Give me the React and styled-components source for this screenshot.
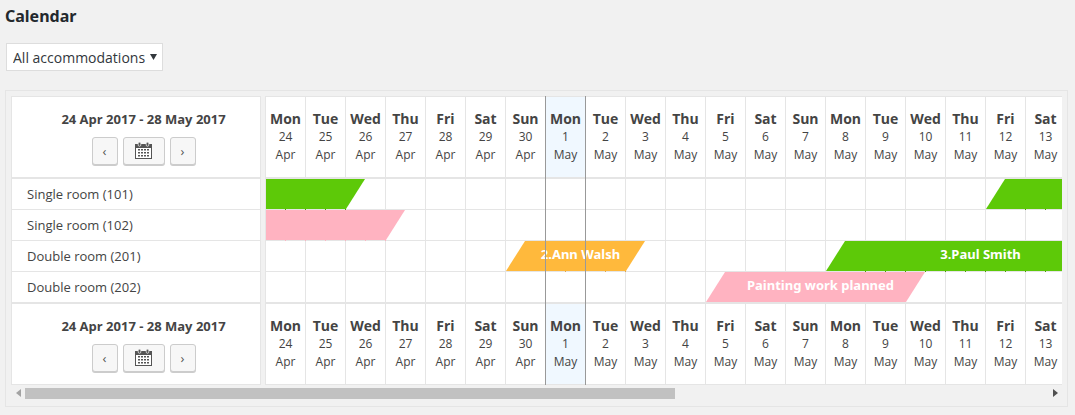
import React, { useState } from 'react'
import styled, { createGlobalStyle } from 'styled-components';

const GlobalStyle = createGlobalStyle`
  * {
    box-sizing: border-box;
  }
  body {
    margin: 0;
    background: #f1f1f1;
    color: #444;
    font-family: "Open Sans", "Noto Sans", sans-serif;
    font-size: 13px;
    line-height: 18px;
  }
`;

const Page = styled.main`
  padding: 4px 7px 8px 5px;
`;

const Title = styled.h1`
  margin: 0;
  color: #23282d;
  font-family: "Noto Sans", sans-serif;
  font-size: 16px;
  font-weight: 700;
  line-height: 24px;
`;

const SelectBox = styled.div`
  display: inline-grid;
  align-items: center;
  margin: 15px 0 0 1px;
  vertical-align: top;
  > * {
    grid-area: 1 / 1;
  }
  svg {
    justify-self: end;
    margin-right: 6px;
    pointer-events: none;
  }
`;

const Select = styled.select`
  appearance: none;
  height: 28px;
  padding: 0 16px 0 6px;
  border: 1px solid #ddd;
  border-radius: 0;
  background: #fff;
  color: #32373c;
  font-family: inherit;
  font-size: 14px;
`;

const Panel = styled.section`
  margin-top: 19px;
  padding: 5px;
  border: 1px solid #e5e5e5;
`;

const Tables = styled.div`
  display: flex;
  gap: 4px;
`;

const Grid = styled.table`
  table-layout: fixed;
  border-spacing: 0;
  border: 1px solid #e5e5e5;
  background: #fff;
`;

const RoomTable = styled(Grid)`
  flex: none;
  width: 250px;
  th, td {
    padding: 0 0 0 15px;
  }
`;

const HeadCell = styled.th`
  height: ${props => props.$foot ? 80 : 82}px;
  padding: 0;
  border-bottom: ${props => props.$foot ? 0 : 2}px solid #e5e5e5;
  font-weight: 400;
`;

const Cell = styled.td`
  height: ${props => props.$last ? 32 : 31}px;
  padding: 0;
  border-bottom: ${props => props.$last ? 2 : 1}px solid #e5e5e5;
`;

const Range = styled.strong`
  display: block;
  margin-bottom: 9px;
`;

const Nav = styled.div`
  display: flex;
  justify-content: center;
  gap: 5px;
`;

const NavButton = styled.button`
  display: flex;
  align-items: center;
  justify-content: center;
  width: ${props => props.$wide ? 42 : 26}px;
  height: 28px;
  padding: 0;
  border: 1px solid #ccc;
  border-radius: 3px;
  background: #f7f7f7;
  box-shadow: 0 1px 0 #ccc;
  color: #555;
  font-family: inherit;
  font-size: 13px;
`;

const Timeline = styled.div`
  position: relative;
  flex: 1;
  min-width: 0;
  overflow: hidden;
`;

const DayTable = styled(Grid)`
  width: 801px;
  border-right: 0;
`;

const DayHead = styled(HeadCell)`
  border-right: 1px solid #e5e5e5;
  background: ${props => props.$today ? '#f0f8ff' : '#fff'};
  font-size: 12px;
  strong, span {
    display: block;
  }
  strong {
    font-size: 14px;
  }
`;

const DayCell = styled(Cell)`
  position: ${props => props.$booked ? 'relative' : 'static'};
  border-right: 1px solid #e5e5e5;
`;

const Today = styled.div`
  position: absolute;
  top: 0;
  bottom: 0;
  left: 280px;
  width: 41px;
  border: solid #999;
  border-width: 0 1px;
  pointer-events: none;
`;

const colors = {
  green: { fill: '#5dc908', tick: '#4a9f08' },
  pink: { fill: '#ffb3c1', tick: '#ffb3c1' },
  orange: { fill: '#ffb93c', tick: '#d9a650' },
};

const Bar = styled.div`
  position: absolute;
  top: 0;
  left: 0;
  width: ${props => props.$days * 40 + 19}px;
  height: 30px;
  padding: 0 0 0 10px;
  background: ${props => colors[props.$color].fill};
  clip-path: polygon(${props => props.$open ? 0 : 19}px 0, 100% 0, calc(100% - 19px) 100%, 0 100%);
  color: #fff;
  font-family: "Noto Sans", sans-serif;
  font-size: 13px;
  font-weight: 700;
  line-height: 26px;
  text-align: center;
  white-space: nowrap;
`;

const Ticks = styled.div`
  position: absolute;
  top: 30px;
  left: ${props => props.$open ? 0 : 20}px;
  width: ${props => props.$days * 40 - (props.$open ? 0 : 20)}px;
  height: 1px;
  background: repeating-linear-gradient(to right, transparent 0 19px, ${props => colors[props.$color].tick} 19px 20px);
`;

const ScrollBar = styled.div`
  display: grid;
  grid-template-columns: 14px 1fr 14px;
  align-items: center;
  height: 16px;
`;

const ScrollButton = styled.button`
  display: flex;
  justify-content: center;
  padding: 0;
  border: 0;
  background: none;
  color: ${props => props.disabled ? '#a3a3a3' : '#505050'};
`;

const Thumb = styled.div`
  width: 63.5%;
  height: 11px;
  background: #c1c1c1;
`;

const names = ['Mon', 'Tue', 'Wed', 'Thu', 'Fri', 'Sat', 'Sun'];

const days = Array.from({ length: 20 }, (_, i) => ({
  name: names[i % 7],
  date: i < 7 ? 24 + i : i - 6,
  month: i < 7 ? 'Apr' : 'May',
  today: i === 7,
}));

const rooms = [
  {
    name: 'Single room (101)',
    bookings: [
      { start: 0, days: 2, color: 'green', open: true },
      { start: 18, days: 4, color: 'green' },
    ],
  },
  {
    name: 'Single room (102)',
    bookings: [{ start: 0, days: 3, color: 'pink', open: true }],
  },
  {
    name: 'Double room (201)',
    bookings: [
      { start: 6, days: 3, color: 'orange', label: '2.Ann Walsh' },
      { start: 14, days: 7, color: 'green', label: '3.Paul Smith' },
    ],
  },
  {
    name: 'Double room (202)',
    bookings: [{ start: 11, days: 5, color: 'pink', label: 'Painting work planned' }],
  },
];

function CalendarIcon() {
  return (
    <svg width="18" height="18" viewBox="0 0 18 18" aria-hidden="true">
      <path fill="#fff" d="M1 6h15v10H1z" />
      <path fill="#555" fillRule="evenodd" d="M0 2h17v15H0zM1 6v10h15V6z" />
      <path fill="#555" stroke="#f7f7f7" strokeWidth=".7" d="M3.200 1.500a1.300 1.300 0 0 1 2.600 0v1.500a1.300 1.300 0 0 1-2.600 0zM11.200 1.500a1.300 1.300 0 0 1 2.600 0v1.500a1.300 1.300 0 0 1-2.600 0z" />
      <path fill="#555" d="M3 7h2v1.600H3zM6 7h2v1.600H6zM9 7h2v1.600H9zM12 7h2v1.600h-2zM3 10h2v1.600H3zM6 10h2v1.600H6zM9 10h2v1.600H9zM12 10h2v1.600h-2zM3 13h2v1.600H3zM6 13h2v1.600H6zM9 13h2v1.600H9zM12 13h2v1.600h-2z" />
    </svg>
  )
}

function RangeCell({ foot }) {
  return (
    <HeadCell $foot={foot}>
      <Range>24 Apr 2017 - 28 May 2017</Range>
      <Nav>
        <NavButton type="button" aria-label="Previous period">‹</NavButton>
        <NavButton type="button" aria-label="Choose dates" $wide><CalendarIcon /></NavButton>
        <NavButton type="button" aria-label="Next period">›</NavButton>
      </Nav>
    </HeadCell>
  )
}

function DayRow({ foot }) {
  return (
    <tr>
      {days.map((day, index) => (
        <DayHead key={index} $foot={foot} $today={day.today}>
          <strong>{day.name}</strong>
          <span>{day.date}</span>
          <span>{day.month}</span>
        </DayHead>
      ))}
    </tr>
  )
}

function App() {
  const [type, setType] = useState('all');

  return (
    <Page>
      <GlobalStyle />
      <Title>Calendar</Title>
      <SelectBox>
        <Select aria-label="Accommodation type" value={type} onChange={(e) => setType(e.target.value)}>
          <option value="all">All accommodations</option>
        </Select>
        <svg width="7" height="6" viewBox="0 0 7 6" aria-hidden="true">
          <path fill="#32373c" d="M0 0h7L3.500 6z" />
        </svg>
      </SelectBox>
      <Panel>
        <Tables>
          <RoomTable>
            <thead><tr><RangeCell /></tr></thead>
            <tbody>
              {rooms.map((room, index) => (
                <tr key={room.name}>
                  <Cell $last={index === rooms.length - 1}>{room.name}</Cell>
                </tr>
              ))}
            </tbody>
            <tfoot><tr><RangeCell foot /></tr></tfoot>
          </RoomTable>
          <Timeline>
            <DayTable>
              <thead><DayRow /></thead>
              <tbody>
                {rooms.map((room, index) => (
                  <tr key={room.name}>
                    {days.map((day, i) => {
                      const booking = room.bookings.find(item => item.start === i)
                      return (
                        <DayCell key={i} $last={index === rooms.length - 1} $booked={!!booking}>
                          {booking && <>
                            <Bar $days={booking.days} $color={booking.color} $open={booking.open}>{booking.label}</Bar>
                            {index < rooms.length - 1 && <Ticks $days={booking.days} $color={booking.color} $open={booking.open} />}
                          </>}
                        </DayCell>
                      )
                    })}
                  </tr>
                ))}
              </tbody>
              <tfoot><DayRow foot /></tfoot>
            </DayTable>
            <Today />
          </Timeline>
        </Tables>
        <ScrollBar>
          <ScrollButton type="button" aria-label="Scroll left" disabled>
            <svg width="5" height="8" viewBox="0 0 5 8"><path fill="currentColor" d="M5 0v8L0 4z" /></svg>
          </ScrollButton>
          <Thumb />
          <ScrollButton type="button" aria-label="Scroll right">
            <svg width="5" height="8" viewBox="0 0 5 8"><path fill="currentColor" d="M0 0v8l5-4z" /></svg>
          </ScrollButton>
        </ScrollBar>
      </Panel>
    </Page>
  )
}

export default App
